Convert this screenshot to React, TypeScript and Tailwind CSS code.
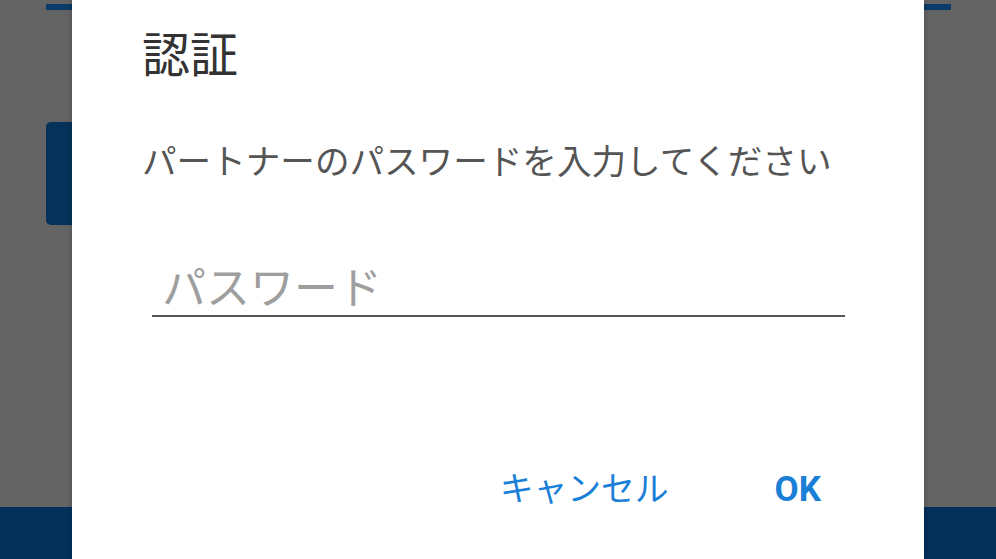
import React from 'react';

export default function App() {
  return (
    <div
      className="relative w-[996px] h-[559px] overflow-hidden bg-[#646464] flex flex-col"
      style={{ fontFamily: 'Roboto, "Noto Sans CJK JP", sans-serif' }}
    >
      {/* dimmed page behind the dialog */}
      <div className="ml-[46px] mt-[4px] w-[905px] h-[6px] bg-[#0b3b68]" />
      <div className="ml-[46px] mt-[112px] w-[120px] h-[103px] rounded-[5px] bg-[#05325a]" />
      <div className="mt-auto h-[52px] bg-[#03315a]" />

      {/* Dialog */}
      <div className="absolute left-[72px] top-0 w-[852px] h-full bg-white shadow-[0_0_6px_rgba(0,0,0,0.25)] flex flex-col pl-[70px] pr-[79px]">
        <h2 className="mt-[27px] text-[48px] leading-[58px] text-[#333333] font-normal">認証</h2>
        <p className="mt-[55px] text-[34.6px] leading-[44px] text-[#555555]">
          パートナーのパスワードを入力してください
        </p>
        <div className="ml-[10px] mt-[79px] border-b-2 border-[#555555]">
          <input
            type="password"
            placeholder="パスワード"
            className="w-full bg-transparent outline-none pl-[10px] text-[44px] leading-[52px] placeholder-[#9e9e9e]"
          />
        </div>
        <div className="mt-auto mb-[47px] flex justify-end items-center gap-[106px] pr-[24px]">
          <button className="text-[33.8px] leading-[44px] text-[#1a7fd6]">キャンセル</button>
          <button className="text-[35px] leading-[44px] font-bold text-[#1a7fd6]">OK</button>
        </div>
      </div>
    </div>
  );
}
